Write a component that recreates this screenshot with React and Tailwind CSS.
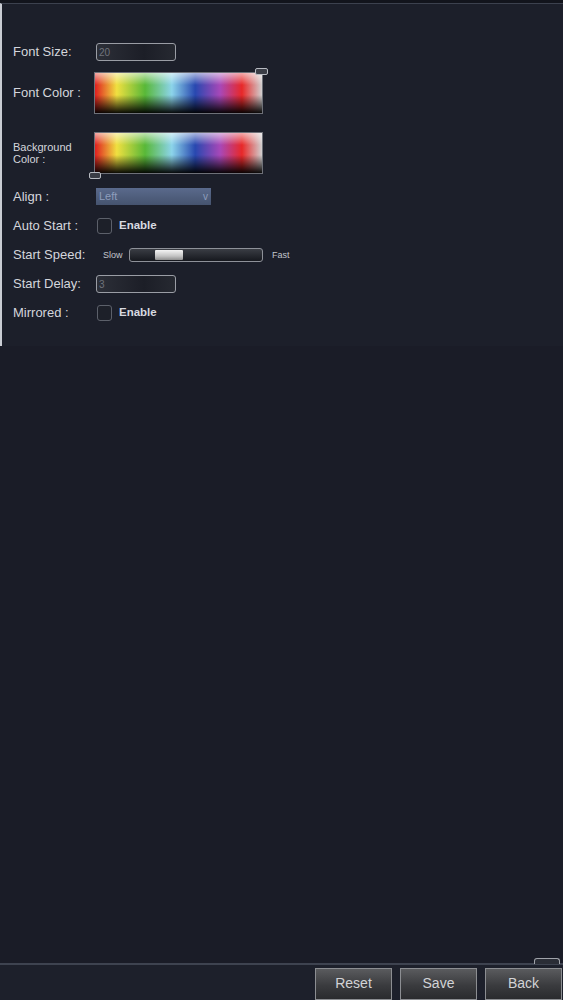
const SPECTRUM =
  "bg-[linear-gradient(to_bottom,rgba(255,255,255,0.6)_0%,rgba(255,255,255,0)_30%,rgba(0,0,0,0)_55%,rgba(0,0,0,0.95)_100%),linear-gradient(to_right,#e02020_0%,#f0e040_13%,#58b838_30%,#8cd4ea_46%,#2848b0_60%,#a848b8_75%,#e82828_88%,#d0d0d0_100%)]";

function Label({ children }) {
  return <div className="w-[83px] shrink-0 text-[13px] leading-[14px] text-[#d4d6dc]">{children}</div>;
}

function TextBox({ value }) {
  return (
    <div className="flex h-[18px] w-[80px] items-center rounded-[3px] border border-[#9a9da5] bg-[linear-gradient(to_right,#2c2f38,#1c1e27_60%,#262931)] pl-[2px] text-[10px] text-[#6f737c]">
      {value}
    </div>
  );
}

function Picker({ handle }) {
  return (
    <div className="relative">
      <div className={`h-[42px] w-[169px] border border-[#6e7078] ${SPECTRUM}`} />
      <div
        className={
          handle === "top"
            ? "absolute -top-[4px] left-[161px] h-[7px] w-[13px] rounded-[2px] border border-[#b8bbc2] bg-[#3a3d46]"
            : "absolute -bottom-[5px] -left-[5px] h-[7px] w-[12px] rounded-[2px] border border-[#b8bbc2] bg-[#3a3d46]"
        }
      />
    </div>
  );
}

function Check() {
  return (
    <div className="flex items-center">
      <div className="h-[16px] w-[15px] rounded-[3px] border border-[#5c606a] bg-[#1d2029]" />
      <span className="ml-[7px] text-[11.5px] font-bold text-[#d8dae0]">Enable</span>
    </div>
  );
}

export default function App() {
  return (
    <div className="flex min-h-screen flex-col bg-[#1b1e29] font-['Liberation_Sans',Arial,sans-serif]">
      <div className="h-[3px] bg-[#12141c]" />
      <div className="h-[343px] border-l-2 border-t border-l-[#c9ccd3] border-t-[#3c414e] bg-[#1c1f2a] pl-[11px]">
        <div className="mt-[39px] flex items-center">
          <Label>Font Size:</Label>
          <TextBox value="20" />
        </div>

        <div className="mt-[11px] flex items-center">
          <Label>Font Color :</Label>
          <div className="-ml-[2px]">
            <Picker handle="top" />
          </div>
        </div>

        <div className="mt-[18px] flex items-center">
          <Label>
            <div className="text-[11px] leading-[12px]">Background<br />Color :</div>
          </Label>
          <div className="-ml-[2px]">
            <Picker handle="bottom" />
          </div>
        </div>

        <div className="mt-[14px] flex items-center">
          <Label>Align :</Label>
          <div className="flex h-[17px] w-[115px] items-center justify-between bg-[linear-gradient(to_bottom,#5a6a8c,#45536e)] px-[3px] text-[11px] text-[#8e9dbc]">
            <span>Left</span>
            <span className="text-[10px]">v</span>
          </div>
        </div>

        <div className="mt-[12px] flex items-center">
          <Label>Auto Start :</Label>
          <div className="ml-[1px]">
            <Check />
          </div>
        </div>

        <div className="mt-[14px] flex items-center">
          <Label>Start Speed:</Label>
          <span className="ml-[7px] w-[26px] text-[9px] text-[#c4c6cc]">Slow</span>
          <div className="relative h-[14px] w-[134px] rounded-[3px] border border-[#8e9199] bg-[linear-gradient(to_bottom,#3a3d44,#16181e)]">
            <div className="absolute left-[25px] top-[1px] h-[10px] w-[28px] rounded-[1px] bg-[linear-gradient(to_bottom,#f4f4f4,#c4c4c4_60%,#8e8e8e)]" />
          </div>
          <span className="ml-[9px] text-[9px] text-[#c4c6cc]">Fast</span>
        </div>

        <div className="mt-[13px] flex items-center">
          <Label>Start Delay:</Label>
          <TextBox value="3" />
        </div>

        <div className="mt-[11px] flex items-center">
          <Label>Mirrored :</Label>
          <div className="ml-[1px]">
            <Check />
          </div>
        </div>
      </div>

      <div className="flex-1 bg-[#1a1c27]" />

      <div className="relative flex h-[37px] items-start justify-end gap-[8px] border-t-2 border-[#3e4350] bg-[#1d202b] pt-[3px] pr-[1px]">
        <div className="absolute -top-[7px] right-[3px] h-[6px] w-[26px] rounded-t-[3px] border border-b-0 border-[#a0a3aa] bg-[#2a2d36]" />
        {["Reset", "Save", "Back"].map((b) => (
          <button
            key={b}
            className="h-[32px] w-[77px] border border-[#8c8e92] bg-[linear-gradient(to_bottom,#5a5b5e,#3a3b3e_55%,#2a2b2e)] pb-[2px] text-[14px] text-[#d2d3d6]"
          >
            {b}
          </button>
        ))}
      </div>
    </div>
  );
}
